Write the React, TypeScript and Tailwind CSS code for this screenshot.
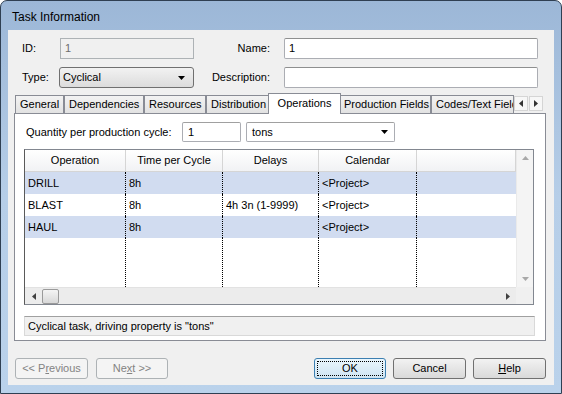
import React from "react";

const Tri = ({ dir, color = "#000" }: { dir: "up" | "down" | "left" | "right"; color?: string }) => {
  const pts = {
    down: "0,0 7,0 3.5,4",
    up: "0,4 7,4 3.5,0",
    left: "4,0 4,7 0,3.5",
    right: "0,0 0,7 4,3.5",
  }[dir];
  const w = dir === "up" || dir === "down" ? 7 : 4;
  const h = dir === "up" || dir === "down" ? 4 : 7;
  return (
    <svg width={w} height={h} viewBox={`0 0 ${w} ${h}`}>
      <polygon points={pts} fill={color} />
    </svg>
  );
};

const rows = [
  { op: "DRILL", time: "8h", delays: "", cal: "<Project>", hl: true },
  { op: "BLAST", time: "8h", delays: "4h 3n (1-9999)", cal: "<Project>", hl: false },
  { op: "HAUL", time: "8h", delays: "", cal: "<Project>", hl: true },
];

const cols = ["w-[101px]", "w-[97px]", "w-[96px]", "w-[98px]", "w-[99px]"];

const Tab = ({ label, w }: { label: string; w: string }) => (
  <div
    className={`${w} h-[18px] shrink-0 overflow-hidden whitespace-nowrap border border-b-0 border-[#898c95] bg-gradient-to-b from-[#f3f3f3] to-[#e2e2e2] px-[4px] text-center leading-[17px]`}
  >
    {label}
  </div>
);

const Btn = ({ children, w, disabled, def }: { children: React.ReactNode; w: string; disabled?: boolean; def?: boolean }) => (
  <div
    className={`${w} h-[21px] rounded-[3px] border flex items-center justify-center ${
      disabled
        ? "border-[#adb2b5] bg-[#f4f4f4] text-[#838383]"
        : def
        ? "border-[#3c7fb1] bg-gradient-to-b from-[#eaf6fd] to-[#cfe4f2] p-[2px]"
        : "border-[#707070] bg-gradient-to-b from-[#f2f2f2] to-[#d9d9d9]"
    }`}
  >
    {def ? (
      <div className="w-full h-full border border-dotted border-black flex items-center justify-center">
        {children}
      </div>
    ) : (
      children
    )}
  </div>
);

export default function App() {
  return (
    <div
      className="w-[562px] h-[394px] text-[11px] text-black"
      style={{ fontFamily: '"Liberation Sans", Arial, sans-serif' }}
    >
      <div className="h-full flex flex-col rounded-t-[7px] border border-[#2f3f52] bg-gradient-to-b from-[#9cb7d7] via-[#b6cee8] to-[#bad2eb]">
        <div className="h-[29px] shrink-0 pl-[11px] pt-[3px] flex items-center text-[12px]">Task Information</div>
        <div className="mx-[7px] mb-[8px] flex-1 bg-[#f0f0f0] flex flex-col">
          {/* Top fields */}
          <div className="pt-[8px] pl-[14px]">
            <div className="flex items-center h-[21px]">
              <div className="w-[38px]">ID:</div>
              <div className="w-[134px] h-[21px] border border-[#adb2b5] bg-[#f0f0f0] text-[#6d6d6d] pl-[4px] leading-[19px]">1</div>
              <div className="w-[76px] text-right">Name:</div>
              <div className="ml-[14px] w-[254px] h-[21px] rounded-[2px] border border-[#abadb3] border-t-[#8e8f8f] bg-white pl-[4px] leading-[19px]">1</div>
            </div>
            <div className="flex items-center h-[21px] mt-[8px]">
              <div className="w-[37px]">Type:</div>
              <div className="w-[135px] h-[21px] rounded-[3px] border border-[#707070] bg-gradient-to-b from-[#f2f2f2] to-[#dcdcdc] pl-[3px] pr-[8px] flex items-center justify-between">
                <span>Cyclical</span>
                <Tri dir="down" />
              </div>
              <div className="w-[76px] text-right">Description:</div>
              <div className="ml-[14px] w-[254px] h-[21px] rounded-[2px] border border-[#abadb3] border-t-[#8e8f8f] bg-white"></div>
            </div>
          </div>

          {/* Tabs */}
          <div className="ml-[6px] mt-[5px] w-[532px]">
            <div className="h-[20px] flex items-end pl-[1px] relative">
              <Tab label="General" w="w-[49px]" />
              <Tab label="Dependencies" w="w-[80px]" />
              <Tab label="Resources" w="w-[62px]" />
              <Tab label="Distribution" w="w-[64px]" />
              <div className="w-[73px] -mx-[2px] h-[21px] -mb-[1px] z-10 shrink-0 border border-b-0 border-[#898c95] bg-white text-center leading-[18px]">
                Operations
              </div>
              <Tab label="Production Fields" w="w-[92px]" />
              <Tab label="Codes/Text Fields" w="w-[83px]" />
              <div className="flex self-start mt-[3px] gap-[1px]">
                <div className="w-[14px] h-[15px] border border-[#d5d5d5] bg-[#f7f7f7] flex items-center justify-center">
                  <Tri dir="left" color="#333" />
                </div>
                <div className="w-[14px] h-[15px] border border-[#d5d5d5] bg-[#f7f7f7] flex items-center justify-center">
                  <Tri dir="right" color="#333" />
                </div>
              </div>
            </div>
            <div className="h-[228px] border border-[#898c95] bg-white flex flex-col">
              {/* Quantity row */}
              <div className="mt-[8px] pl-[11px] flex items-center h-[20px]">
                <div className="w-[156px]">Quantity per production cycle:</div>
                <div className="w-[59px] h-[20px] rounded-[2px] border border-[#abadb3] border-t-[#a0a0a0] bg-white pl-[5px] leading-[18px]">1</div>
                <div className="ml-[5px] w-[149px] h-[20px] rounded-[2px] border border-[#abadb3] border-t-[#a0a0a0] bg-white pl-[5px] pr-[6px] flex items-center justify-between">
                  <span>tons</span>
                  <Tri dir="down" />
                </div>
              </div>

              {/* Grid */}
              <div className="mt-[7px] ml-[9px] w-[510px] h-[156px] border border-[#828790] border-l-[#5a5a5a] flex flex-col">
                <div className="flex h-[137px]">
                  <div className="w-[491px] flex flex-col">
                    <div className="flex h-[22px] bg-gradient-to-b from-white to-[#f1f2f4] border-b border-[#d5d5d5]">
                      {["Operation", "Time per Cycle", "Delays", "Calendar", ""].map((h, i) => (
                        <div key={i} className={`${cols[i]} border-r border-[#d5d5d5] text-center leading-[21px]`}>
                          {h}
                        </div>
                      ))}
                    </div>
                    {rows.map((r, ri) => (
                      <div key={ri} className={`flex h-[22px] ${r.hl ? "bg-[#d1dcf0]" : "bg-white"}`}>
                        {[r.op, r.time, r.delays, r.cal, ""].map((c, i) => (
                          <div
                            key={i}
                            className={`${cols[i]} ${i < 4 ? "border-r border-dotted border-black" : ""} pl-[3px] leading-[22px] whitespace-nowrap`}
                          >
                            {c}
                          </div>
                        ))}
                      </div>
                    ))}
                    <div className="flex flex-1">
                      {cols.map((c, i) => (
                        <div key={i} className={`${c} ${i < 4 ? "border-r border-dotted border-black" : ""}`}></div>
                      ))}
                    </div>
                  </div>
                  <div className="w-[17px] bg-[#f4f4f4] border-l border-[#eaeaea] flex flex-col items-center justify-between py-[6px]">
                    <Tri dir="up" color="#a8a8a8" />
                    <Tri dir="down" color="#a8a8a8" />
                  </div>
                </div>
                <div className="flex h-[17px]">
                  <div className="w-[491px] bg-[#ececec] border-t border-[#e2e2e2] flex items-center">
                    <div className="w-[17px] flex justify-center">
                      <Tri dir="left" color="#404040" />
                    </div>
                    <div className="w-[17px] h-[15px] rounded-[2px] border border-[#9a9a9a] bg-gradient-to-b from-[#f4f4f4] to-[#d8d8d8]"></div>
                    <div className="flex-1"></div>
                    <div className="w-[17px] flex justify-center">
                      <Tri dir="right" color="#404040" />
                    </div>
                  </div>
                  <div className="w-[17px] bg-[#f0f0f0]"></div>
                </div>
              </div>

              {/* Status */}
              <div className="mt-[11px] ml-[9px] w-[511px] h-[20px] border border-[#d9d9d9] border-t-[#a0a0a0] bg-[#f0f0f0] pl-[3px] leading-[18px]">
                Cyclical task, driving property is "tons"
              </div>
            </div>
          </div>

          {/* Buttons */}
          <div className="mt-[17px] pl-[7px] pr-[8px] flex">
            <Btn w="w-[73px]" disabled>
              <span>
                &lt;&lt; P<u>r</u>evious
              </span>
            </Btn>
            <div className="ml-[8px]">
              <Btn w="w-[72px]" disabled>
                <span>
                  Ne<u>x</u>t &gt;&gt;
                </span>
              </Btn>
            </div>
            <div className="flex-1"></div>
            <Btn w="w-[72px]" def>
              OK
            </Btn>
            <div className="ml-[7px]">
              <Btn w="w-[73px]">Cancel</Btn>
            </div>
            <div className="ml-[7px]">
              <Btn w="w-[73px]">
                <span>
                  <u>H</u>elp
                </span>
              </Btn>
            </div>
          </div>
        </div>
      </div>
    </div>
  );
}
